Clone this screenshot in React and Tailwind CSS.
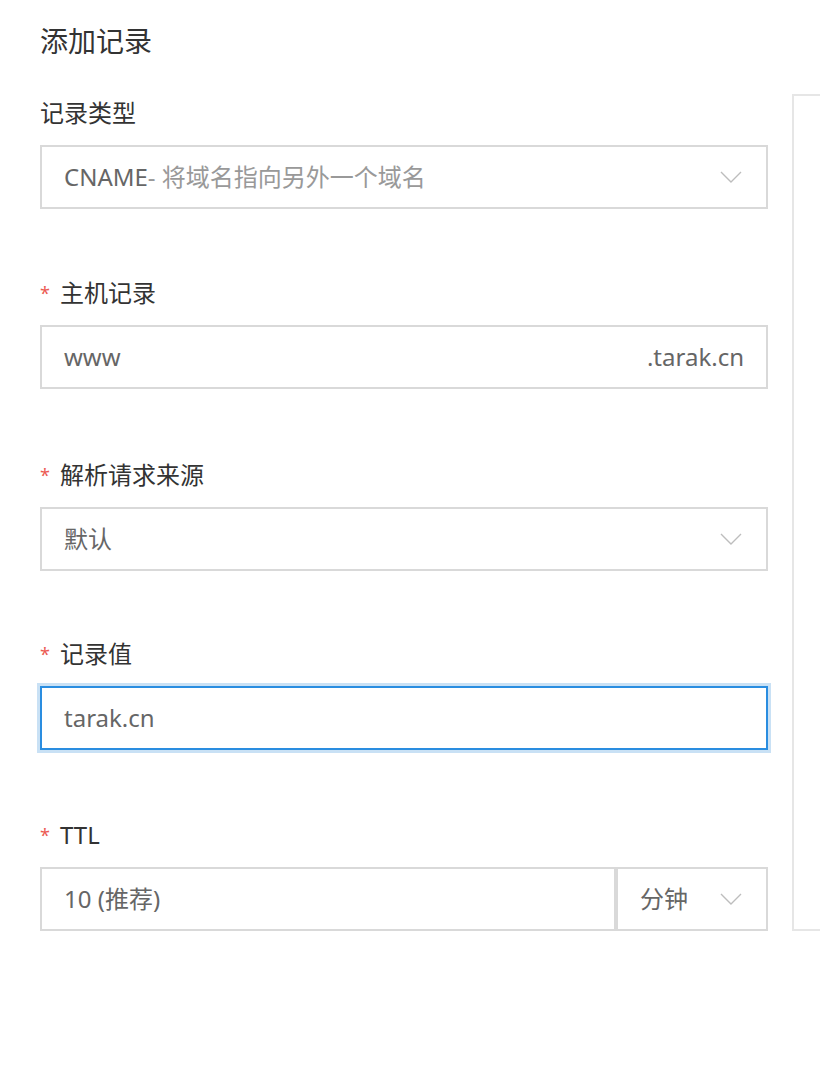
import React from "react";

const font = { fontFamily: '"Noto Sans", "Noto Sans CJK SC", sans-serif' };

function Chevron() {
  return (
    <svg width="22" height="14" viewBox="0 0 22 14" fill="none" className="shrink-0">
      <path d="M1 2 L11 12 L21 2" stroke="#bdbdbd" strokeWidth="1.4" />
    </svg>
  );
}

function Label({ children, required }) {
  return (
    <div className="mb-4 flex h-8 items-center text-[24px] leading-8 text-[#333]">
      {required && <span className="mr-[8px] w-[12px] text-[18px] leading-none text-[#ec5b52]">*</span>}
      {children}
    </div>
  );
}

export default function App() {
  return (
    <div className="relative min-h-[1080px] w-[820px] bg-white" style={font}>
      <div className="flex">
        <div className="w-[728px] shrink-0 pl-[40px] pt-[23px]" style={{ boxSizing: "content-box" }}>
          <h1 className="h-9 text-[28px] leading-9 text-[#333]">添加记录</h1>

          <div className="mt-[38px]">
            <Label>记录类型</Label>
            <div className="flex h-16 items-center justify-between border-2 border-[#d9d9d9] pl-[22px] pr-[24px] text-[24px]">
              <span>
                <span className="text-[#666]">CNAME</span>
                <span className="text-[#999]">- 将域名指向另外一个域名</span>
              </span>
              <Chevron />
            </div>
          </div>

          <div className="mt-[68px]">
            <Label required>主机记录</Label>
            <div className="flex h-16 items-center justify-between border-2 border-[#d9d9d9] pl-[22px] pr-[22px] text-[24px] text-[#666]">
              <span>www</span>
              <span>.tarak.cn</span>
            </div>
          </div>

          <div className="mt-[70px]">
            <Label required>解析请求来源</Label>
            <div className="flex h-16 items-center justify-between border-2 border-[#d9d9d9] pl-[22px] pr-[24px] text-[24px] text-[#666]">
              <span>默认</span>
              <Chevron />
            </div>
          </div>

          <div className="mt-[67px]">
            <Label required>记录值</Label>
            <div className="flex h-16 items-center border-2 border-[#2a8de0] pl-[22px] text-[24px] text-[#666] shadow-[0_0_0_3px_#c9e1f5]">
              <span>tarak.cn</span>
            </div>
          </div>

          <div className="mt-[69px]">
            <Label required>TTL</Label>
            <div className="flex h-16">
              <div className="flex flex-1 items-center border-2 border-[#d9d9d9] pl-[22px] text-[24px] text-[#666]">
                10 (推荐)
              </div>
              <div className="flex w-[152px] items-center justify-between border-2 border-[#d9d9d9] pl-[22px] pr-[24px] text-[24px] text-[#666]">
                <span>分钟</span>
                <Chevron />
              </div>
            </div>
          </div>
        </div>

        <div className="ml-[24px] mt-[94px] h-[837px] flex-1 border-2 border-r-0 border-[#e6e6e6]" />
      </div>
    </div>
  );
}
